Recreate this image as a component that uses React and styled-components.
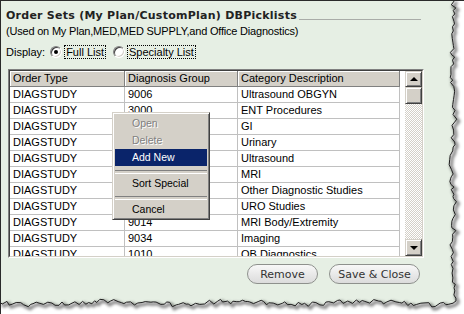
import React from "react"
import styled, { createGlobalStyle } from "styled-components"

const GlobalStyle = createGlobalStyle`
  html, body {
    margin: 0;
    padding: 0;
    background: #ffffff;
  }
  * {
    box-sizing: border-box;
  }
`

const Page = styled.div`
  position: relative;
  width: 464px;
  height: 314px;
  overflow: hidden;
  background: #e6efe4;
  border-left: 1px solid #2a2a2a;
  border-top: 1px solid #2a2a2a;
  padding: 7px 0 0 5px;
  font-family: "Liberation Sans", Arial, sans-serif;
  font-size: 11px;
  color: #000;
`

const TitleRow = styled.div`
  display: flex;
  align-items: flex-end;
  width: 415px;
  height: 15px;
`

const Title = styled.h1`
  margin: 0;
  font-family: "DejaVu Sans", Verdana, sans-serif;
  font-weight: bold;
  font-size: 11px;
  letter-spacing: 0.25px;
  line-height: 15px;
  color: #222;
  white-space: nowrap;
`

const TitleRule = styled.div`
  flex: 1;
  height: 1px;
  margin: 0 0 3px 2px;
  background: #a9aca8;
`

const Subtitle = styled.p`
  margin: 1px 0 0 0;
  line-height: 14px;
  letter-spacing: -0.2px;
  white-space: nowrap;
`

const DisplayRow = styled.div`
  display: flex;
  align-items: center;
  height: 14px;
  margin-top: 7px;
`

const Radio = styled.span`
  position: relative;
  display: inline-block;
  width: 12px;
  height: 12px;
  margin: 0 3px 0 ${(p) => p.$gap}px;
  border-radius: 50%;
  background: #fff;
  border: 1px solid;
  border-color: #808080 #ffffff #ffffff #808080;
  box-shadow: inset 1px 1px 0 #404040, inset -1px -1px 0 #d4d0c8;

  &::after {
    content: "";
    display: ${(p) => (p.$checked ? "block" : "none")};
    position: absolute;
    left: 3px;
    top: 3px;
    width: 4px;
    height: 4px;
    border-radius: 50%;
    background: #000;
  }
`

const RadioLabel = styled.span`
  padding: 0 1px;
  line-height: 12px;
  outline: 1px dotted #000;
  outline-offset: 0;
`

const Table = styled.div`
  display: flex;
  width: 416px;
  height: 189px;
  margin: 10px 0 0 2px;
  border: 1px solid;
  border-color: #808080 #ffffff #ffffff #808080;
  background: #fff;
`

const TableInner = styled.div`
  display: flex;
  flex: 1;
  border: 1px solid;
  border-color: #404040 #d4d0c8 #d4d0c8 #404040;
  overflow: hidden;
`

const Grid = styled.div`
  flex: 1;
  display: grid;
  grid-template-columns: 115px 113px 162px;
  grid-auto-rows: 16px;
  align-content: start;
`

const HeadCell = styled.div`
  padding-left: 3px;
  line-height: 15px;
  background: #d4d0c8;
  border-right: 1px solid #808080;
  border-bottom: 1px solid #808080;
  box-shadow: inset 1px 1px 0 #ffffff;
  white-space: nowrap;
`

const Cell = styled.div`
  padding-left: 3px;
  line-height: 15px;
  border-right: 1px solid #c0c0c0;
  border-bottom: 1px solid #c0c0c0;
  white-space: nowrap;
  overflow: hidden;
`

const ScrollBar = styled.div`
  display: flex;
  flex-direction: column;
  width: 17px;
  margin-left: 5px;
  background-color: #fff;
  background-image: repeating-conic-gradient(#d4d0c8 0 25%, #ffffff 0 50%);
  background-size: 2px 2px;
`

const ScrollButton = styled.div`
  display: flex;
  align-items: center;
  justify-content: center;
  width: 17px;
  height: ${(p) => p.$h}px;
  margin-top: ${(p) => (p.$bottom ? "auto" : "0")};
  background: #d4d0c8;
  border: 1px solid;
  border-color: #d4d0c8 #404040 #404040 #d4d0c8;
  box-shadow: inset 1px 1px 0 #ffffff, inset -1px -1px 0 #808080;
`

const Arrow = styled.span`
  width: 0;
  height: 0;
  border-left: 4px solid transparent;
  border-right: 4px solid transparent;
  ${(p) =>
    p.$down ? "border-top: 4px solid #000;" : "border-bottom: 4px solid #000;"}
`

const ButtonRow = styled.div`
  display: flex;
  justify-content: flex-end;
  gap: 11px;
  width: 418px;
  padding-right: 4px;
  margin-top: 6px;
`

const PillButton = styled.button`
  height: 20px;
  width: ${(p) => p.$w}px;
  padding: 0;
  border: 1px solid #8e918d;
  border-radius: 10px;
  background: linear-gradient(#f8f8f8, #e8e8e8 55%, #dcdcdc);
  font-family: "DejaVu Sans", Verdana, sans-serif;
  font-size: 11px;
  color: #333;
`

const Menu = styled.div`
  position: absolute;
  left: 111px;
  top: 111px;
  width: 98px;
  height: 108px;
  padding: 2px;
  background: #d4d0c8;
  border: 1px solid;
  border-color: #d4d0c8 #404040 #404040 #d4d0c8;
  box-shadow: inset 1px 1px 0 #ffffff, inset -1px -1px 0 #808080;
  font-family: "Liberation Sans", Tahoma, sans-serif;
  font-size: 10.5px;
`

const MenuItem = styled.div`
  height: 17px;
  line-height: 17px;
  padding-left: 17px;
  background: ${(p) => (p.$active ? "#0a246a" : "transparent")};
  color: ${(p) => (p.$active ? "#fff" : p.$disabled ? "#808080" : "#000")};
  text-shadow: ${(p) => (p.$disabled ? "1px 1px 0 #ffffff" : "none")};
`

const MenuSeparator = styled.div`
  height: 9px;
  padding-top: 4px;

  &::before {
    content: "";
    display: block;
    height: 2px;
    border-top: 1px solid #808080;
    border-bottom: 1px solid #ffffff;
  }
`

const Torn = styled.svg`
  position: absolute;
  left: -1px;
  top: -1px;
  pointer-events: none;
`

const rows = [
  ["DIAGSTUDY", "9006", "Ultrasound OBGYN"],
  ["DIAGSTUDY", "3000", "ENT Procedures"],
  ["DIAGSTUDY", "", "GI"],
  ["DIAGSTUDY", "", "Urinary"],
  ["DIAGSTUDY", "", "Ultrasound"],
  ["DIAGSTUDY", "", "MRI"],
  ["DIAGSTUDY", "", "Other Diagnostic Studies"],
  ["DIAGSTUDY", "", "URO Studies"],
  ["DIAGSTUDY", "9014", "MRI Body/Extremity"],
  ["DIAGSTUDY", "9034", "Imaging"],
  ["DIAGSTUDY", "1010", "OB Diagnostics"],
]

// jagged "torn paper" edge along the right and bottom
const tornEdge = () => {
  let s = 17
  const r = () => {
    s = (s * 9301 + 49297) % 233280
    return s / 233280
  }
  const pts = []
  for (let y = 0; y < 300; y += 2 + r() * 3) {
    pts.push([453 + (r() - 0.5) * 5 + 1.5 * Math.sin(y / 15), y])
  }
  for (let x = 456; x > 0; x -= 2 + r() * 3) {
    pts.push([x, 303 + (r() - 0.5) * 5 + 1.5 * Math.sin(x / 21)])
  }
  pts.push([0, 302])
  return pts.map((p) => `${p[0].toFixed(1)},${p[1].toFixed(1)}`)
}

const edge = tornEdge()

const App = () => {
  return (
    <>
      <GlobalStyle />
      <Page>
        <TitleRow>
          <Title>Order Sets (My Plan/CustomPlan) DBPicklists</Title>
          <TitleRule />
        </TitleRow>
        <Subtitle>(Used on My Plan,MED,MED SUPPLY,and Office Diagnostics)</Subtitle>
        <DisplayRow>
          Display:
          <Radio $checked $gap={5} />
          <RadioLabel>Full List</RadioLabel>
          <Radio $gap={8} />
          <RadioLabel>Specialty List</RadioLabel>
        </DisplayRow>
        <Table>
          <TableInner>
            <Grid>
              <HeadCell>Order Type</HeadCell>
              <HeadCell>Diagnosis Group</HeadCell>
              <HeadCell>Category Description</HeadCell>
              {rows.map((row, idx) =>
                row.map((text, c) => <Cell key={`${idx}-${c}`}>{text}</Cell>)
              )}
            </Grid>
            <ScrollBar>
              <ScrollButton $h={16}>
                <Arrow />
              </ScrollButton>
              <ScrollButton $h={17} />
              <ScrollButton $h={17} $bottom>
                <Arrow $down />
              </ScrollButton>
            </ScrollBar>
          </TableInner>
        </Table>
        <ButtonRow>
          <PillButton $w={71}>Remove</PillButton>
          <PillButton $w={91}>Save &amp; Close</PillButton>
        </ButtonRow>

        <Menu>
          <MenuItem $disabled>Open</MenuItem>
          <MenuItem $disabled>Delete</MenuItem>
          <MenuItem $active>Add New</MenuItem>
          <MenuSeparator />
          <MenuItem>Sort Special</MenuItem>
          <MenuSeparator />
          <MenuItem>Cancel</MenuItem>
        </Menu>

        <Torn width="464" height="314" viewBox="0 0 464 314">
          <defs>
            <filter id="blur" x="-10%" y="-10%" width="120%" height="120%">
              <feGaussianBlur stdDeviation="1.4" />
            </filter>
          </defs>
          <polygon points={`464,0 ${edge.join(" ")} 0,314 464,314`} fill="#ffffff" />
          <polyline
            points={edge.join(" ")}
            fill="none"
            stroke="rgba(0,0,0,0.5)"
            strokeWidth="3"
            transform="translate(2 2)"
            filter="url(#blur)"
          />
          <polyline points={edge.join(" ")} fill="none" stroke="#1e1e1e" strokeWidth="1" />
        </Torn>
      </Page>
    </>
  )
}

export default App
